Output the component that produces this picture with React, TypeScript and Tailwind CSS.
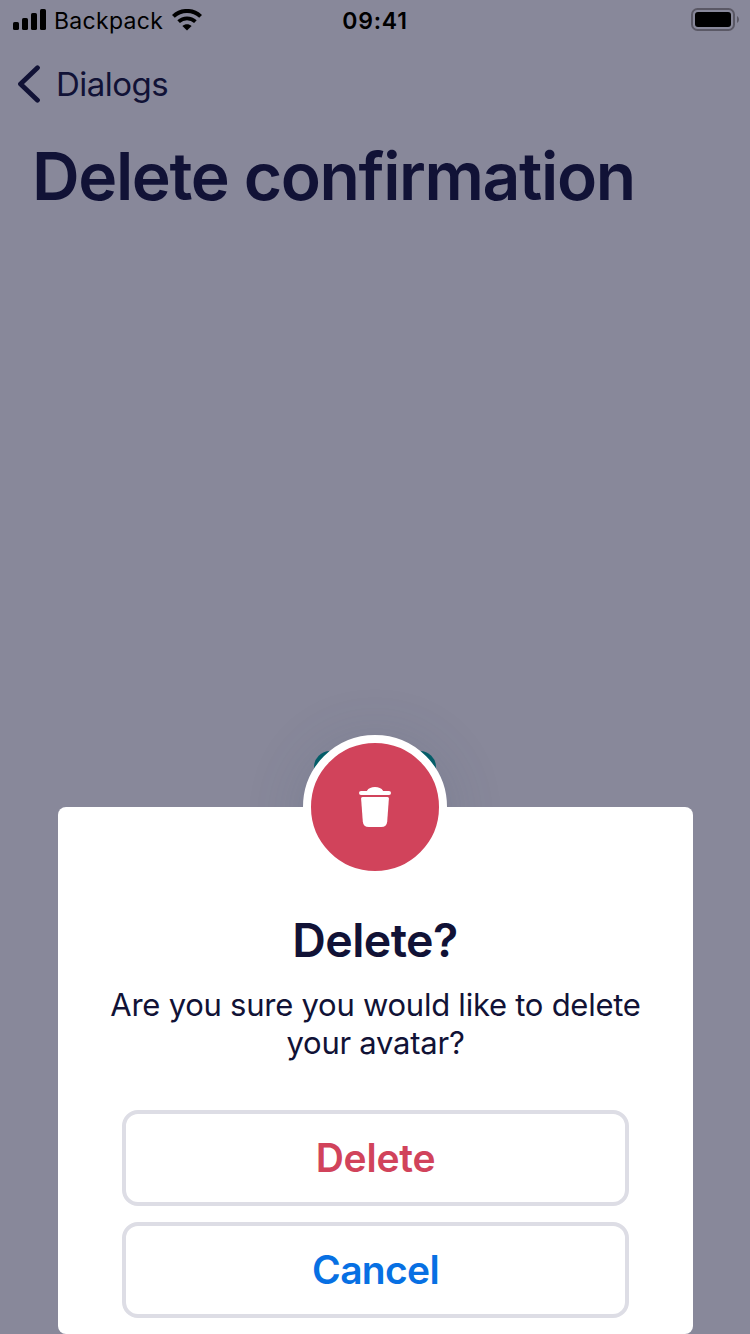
function StatusBar() {
  return (
    <div className="grid h-10 grid-cols-[1fr_auto_1fr] items-center text-black">
      <div className="flex h-10 items-center pl-[13px]">
        <svg width="33" height="21" viewBox="0 0 33 21" fill="currentColor" className="mb-px shrink-0">
          <rect x="0" y="13" width="6" height="8" rx="1.6" />
          <rect x="9" y="9" width="6" height="12" rx="1.6" />
          <rect x="18" y="4" width="6" height="17" rx="1.6" />
          <rect x="27" y="0" width="6" height="21" rx="1.6" />
        </svg>
        <span className="ml-[8px] w-[118px] pt-[2px] text-[23px] leading-[38px] tracking-[0.3px]">Backpack</span>
        <svg width="30" height="22" viewBox="0 0 30 22" fill="none" stroke="currentColor" className="shrink-0">
          <path d="M1.4 7.4C9 .1 21 .1 28.600 7.400" strokeWidth="4" />
          <path d="M6.600 12.700C11.300 8.300 18.700 8.300 23.400 12.700" strokeWidth="3.800" />
          <path d="M15 21.500 10.400 17C13 14.700 17 14.700 19.600 17Z" fill="currentColor" stroke="none" />
        </svg>
      </div>
      <span className="pt-[2px] text-[23px] leading-[38px] font-semibold tracking-[0.8px]">09:41</span>
      <div className="flex justify-end pr-[11px]">
        <svg width="48" height="24" viewBox="0 0 48 24">
          <rect x="1" y="1" width="42" height="21" rx="5.500" fill="none" stroke="#5a5865" strokeWidth="2" />
          <rect x="4" y="4" width="36" height="15" rx="3" fill="#000" />
          <path d="M46 8C48.600 9.500 48.600 13.500 46 15Z" fill="#5a5865" />
        </svg>
      </div>
    </div>
  );
}

function TrashIcon() {
  return (
    <svg width="32" height="40" viewBox="0 0 32 40" fill="#fff">
      <path d="M2 4H7.800C9.500 1 12.500 0 16 0S22.500 1 24.200 4H30A2 2 0 0 1 30 8H2A2 2 0 0 1 2 4Z" />
      <path d="M3.500 10H28.500Q30 10 29.900 11.500L28.200 34.500Q27.700 40 22.200 40H9.800Q4.300 40 3.800 34.500L2.100 11.500Q2 10 3.500 10Z" />
    </svg>
  );
}

function DialogButton({ label, color }: { label: string; color: string }) {
  return (
    <button
      className={`flex h-24 w-full items-center justify-center rounded-2xl border-4 border-[#dddde5] pl-px text-[39px] font-semibold ${color}`}
    >
      {label}
    </button>
  );
}

function DeleteDialog() {
  return (
    <div className="relative flex h-[527px] w-[635px] flex-col rounded-[8px] bg-white px-16 pt-[107px] text-center text-[#111236]">
      <div className="absolute -top-[72px] left-[245px] flex size-36 items-center justify-center rounded-full border-8 border-white bg-[#d1435b]">
        <TrashIcon />
      </div>
      <h2 className="h-[52px] text-[46.500px] leading-[52px] font-semibold tracking-[-0.600px]">Delete?</h2>
      <p className="-mx-8 mt-[20px] h-[76px] pl-px text-[31px] leading-[38px] tracking-[-0.250px]">
        Are you sure you would like to delete
        <br />
        your avatar?
      </p>
      <div className="mt-12 flex flex-col gap-4">
        <DialogButton label="Delete" color="text-[#d1435b] tracking-[-0.200px]" />
        <DialogButton label="Cancel" color="text-[#0770e3] tracking-[-0.700px]" />
      </div>
    </div>
  );
}

export default function App() {
  return (
    <div className="relative h-[1334px] w-[750px] overflow-hidden bg-[#88889a] font-[Inter,'Liberation_Sans',sans-serif]">
      <StatusBar />
      <header className="text-[#111236]">
        <div className="flex h-[88px] items-center pl-[17px]">
          <svg width="24" height="38" viewBox="0 0 24 38" fill="none" stroke="currentColor" strokeWidth="4.800" strokeLinecap="round" strokeLinejoin="round">
            <path d="M20.500 2.800 3.500 19 20.500 35.200" />
          </svg>
          <span className="ml-[15px] text-[33px] leading-[44px] tracking-[-0.500px]">Dialogs</span>
        </div>
        <h1 className="pl-8 text-[66px] leading-[97px] font-semibold tracking-[-1.380px] whitespace-nowrap">Delete confirmation</h1>
      </header>
      <main className="mt-[526px] flex justify-center">
        <button className="h-16 w-[122px] rounded-2xl bg-[#025f69]" aria-label="Show dialog" />
      </main>
      <div className="absolute inset-0 flex items-end justify-center">
        <div className="absolute top-[735px] left-[303px] size-36 rounded-full shadow-[0_8px_60px_rgba(60,80,110,0.190)]" />
        <DeleteDialog />
      </div>
    </div>
  );
}
